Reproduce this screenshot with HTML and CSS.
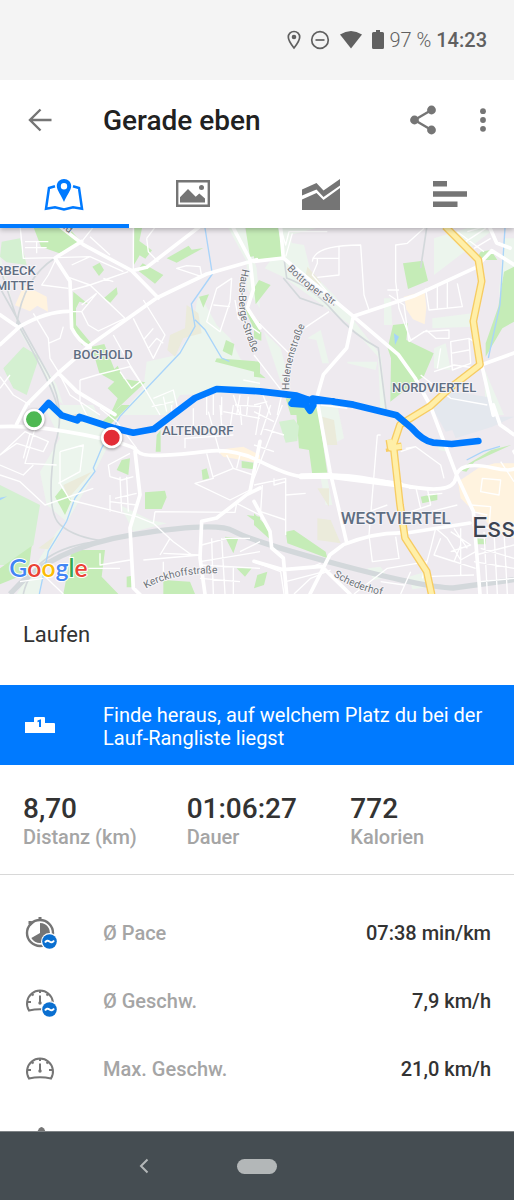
FILE: index.html
```html
<!DOCTYPE html>
<html lang="de">
<head>
    <meta charset="UTF-8">
    <meta name="viewport" content="width=device-width, initial-scale=1">
    <title>Gerade eben</title>
    <link rel="stylesheet" href="styles.css">
</head>
<body>
    <div class="status">
        <svg width="14" height="20" viewBox="0 0 14 20"><path d="M7 1.5C3.7 1.5 1.3 4 1.3 7.1 1.3 11 7 18 7 18s5.700-7 5.700-10.900C12.700 4 10.300 1.500 7 1.500z" fill="none" stroke="#606060" stroke-width="1.700"/><circle cx="7" cy="7" r="2.300" fill="#606060"/></svg>
        <svg width="20" height="20" viewBox="0 0 20 20" fill="none" stroke="#606060" stroke-width="1.700"><circle cx="10" cy="10" r="8.300"/><path d="M5.500 10h9"/></svg>
        <svg width="24" height="20" viewBox="0 0 24 20"><path d="M1 4.500Q12-2.500 23 4.500L12 18.500z" fill="#606060"/></svg>
        <svg width="12" height="20" viewBox="0 0 12 20"><path d="M4 0h4v2h2.500q1.500 0 1.500 1.500v14q0 1.500-1.500 1.500h-9Q0 19 0 17.500v-14Q0 2 1.500 2H4z" fill="#606060"/></svg>
        <span class="battery">97 %</span>
        <time class="clock">14:23</time>
    </div>

    <header class="app-bar">
        <button class="icon-btn" type="button" aria-label="Zurück">
            <svg width="24" height="24" viewBox="0 0 24 24" fill="none" stroke="#757575" stroke-width="2.400"><path d="M23.500 12H2.500M12.500 1.500 2 12l10.500 10.500"/></svg>
        </button>
        <h1 class="title">Gerade eben</h1>
        <button class="icon-btn share" type="button" aria-label="Teilen">
            <svg width="28" height="30" viewBox="0 0 28 30" fill="#757575"><path d="M22.500 5 5.500 15l17 10" fill="none" stroke="#757575" stroke-width="2.400"/><circle cx="22.500" cy="5" r="4.400"/><circle cx="5.500" cy="15" r="4.400"/><circle cx="22.500" cy="25" r="4.400"/></svg>
        </button>
        <button class="icon-btn" type="button" aria-label="Mehr">
            <svg width="6" height="24" viewBox="0 0 6 24" fill="#757575"><circle cx="3" cy="3.200" r="2.900"/><circle cx="3" cy="12" r="2.900"/><circle cx="3" cy="20.800" r="2.900"/></svg>
        </button>
    </header>

    <nav class="tabs">
        <button class="tab active" type="button" aria-label="Karte">
            <svg width="40" height="34" viewBox="0 0 40 34"><path d="M11 9.200 5 11 2 31.800l9-1.500 9 2.200 9-2.200 9 1.500L35 11l-6-1.800" fill="none" stroke="#007aff" stroke-width="2.500"/><path fill="#007aff" fill-rule="evenodd" d="M20 2c-4 0-7.200 3-7.200 7 0 4.500 4.700 9.500 7.200 16 2.500-6.500 7.200-11.500 7.200-16 0-4-3.200-7-7.200-7zm0 4a3.200 3.200 0 1 1 0 6.400A3.200 3.200 0 0 1 20 6z"/></svg>
        </button>
        <button class="tab" type="button" aria-label="Fotos">
            <svg width="34" height="28" viewBox="0 0 34 28"><path d="M1.200 1.200h31.600v24.600H1.200z" fill="none" stroke="#757575" stroke-width="2.400"/><path d="M4 22.500v-5.200l8-8.300 7.700 7.700 3.600-3.100 5.700 5v3.900z" fill="#757575"/><circle cx="25.500" cy="7.500" r="2.500" fill="#757575"/></svg>
        </button>
        <button class="tab" type="button" aria-label="Diagramm">
            <svg width="40" height="34" viewBox="0 0 40 34" fill="#757575"><path d="M1 12.500 15.500 6l7 7.500L39 2v6.500L22.500 20l-7-7.500L1 18.500z"/><path d="M1 22.500 15.500 16l7 7L39 11v22H1z"/></svg>
        </button>
        <button class="tab" type="button" aria-label="Werte">
            <svg width="36" height="28" viewBox="0 0 36 28" fill="#757575"><path d="M1 1h14v5.500H1zM1 11.200h34v5.600H1zM1 21.500h24.500V27H1z"/></svg>
        </button>
    </nav>

    <main class="content">
        <!-- Route map, drawn in four tiles -->
        <svg class="map" viewBox="0 0 1542 1098" role="img" aria-label="Laufstrecke">
            <defs>
                <path id="haus" d="M727 122Q705 225 731 300T772 410"/>
                <path id="helenen" d="M868 486Q864 400 926 268"/>
                <path id="bottroper" d="M860 123Q925 192 1024 246"/>
                <path id="kerck" d="M438 1082Q520 1032 670 1036"/>
                <path id="scheder" d="M1000 1043Q1075 1096 1200 1110"/>
                <path id="feld" d="M168 -17 250 52"/>
            </defs>

            <!-- parks, fields, buildings -->
            <g transform="translate(0 -9)">
                <path class="mist" d="M590 230 580 310 530 390 440 410 430 490 360 570 500 570 540 510 780 500V450L720 400 690 340 650 300 600 210zM0 90 60 320 180 530 230 570H200L170 480 50 290 20 190 0 120zM680 0h50l40 130 10 120-40-60V110z"/>
                <path class="mint" d="M5 50 60 40 80 120 20 112 0 95zM10 430 70 365 118 395 80 510 40 490z"/>
                <path class="park" d="M98 0h100l45 50-65 35-55-20zM403 0h25l-10 48 38 28-20 25-17-10-17 28zM500 100l66-38 9 12 35-5-80 44zM277 125l22-12 13 22-15 18zM428 115 490 150 465 176 412 135zM220 200l45 38-27-8-10 20 0 50 48 58-30 3-30-55zM350 187l3 20-22 26-20-13zM275 365l38-8 30 75 10-10 18 40 65 10-105 98H330l23-50-30-30 20-20-45-25zM597 215l30-7-17 40zM650 400l130 10v35l-135-35zM678 345l25 12-7 35-28-14zM725 230l35 80 20 20V290l-15 5zM735 0h45v90l-30 6z"/>
                <path class="sand" d="M560 240 595 265 605 325 550 340 525 395 502 375 510 330 555 310z"/>
                <path class="peach" d="M72 180l68 35 4 45-32-18-22 17-45-18z"/>
            </g>
            <g transform="translate(762 -9)">
                <path class="mist" d="M60 0h160L110 30l10 70-60-20zM150 60l20 80 70 70 140 180 20 180H380l-8-175-90-100-195-140-55-25 60-80zM540 40l130-40 40 20-170 130zM535 280l120-15v40l-120 5zM735 200l15 50 30-110V40h-30zM30 320l50 50 30 120-30-20zM390 220l20 0 5 80-25 0zM160 340l40-25 25 100-20 0-18-70zM280 410l90 0-5 25-85-20zM540 370l35-15 15 80-50-5zM690 430l60 140h-55z"/>
                <path class="park" d="M0 0h70l20 95L0 105zM0 190l15-25 35 15-45 58zM0 310l22 12v25L0 340zM447 115l60-8 15 60-60 25zM417 300l45-5-5 50 82 40-30 70-30 20-70 55 2-130-10-30zM680 80l30-5 20 30-65 0zM750 140l30-15v165l-35 20-50 85 0-40 38-110zM0 430l35 30-35-5zM95 520l65 0-15 50H110z"/>
                <path class="peach" d="M450 215l62-17 5 50-5 50-35-15-20-30z"/>
                <path class="sand" d="M160 125l40 45-5 20-40-40z"/>
                <path class="water-fill" d="M420 325l15 10-12 25z"/>
            </g>
            <g transform="translate(0 531)">
                <path class="mist" d="M130 0h150l50 110-55 110-135 240-20 107H50L170 380 200 350 140 300 120 200 180 100zM180 110l80 0-10 90-70 10z"/>
                <path class="mist" d="M360 300l40 80 100-25-50-10z"/>
                <path class="mint" d="M0 240l120 60-20 120-70 60H0z"/>
                <path class="park" d="M365 0h25l-70 70-20-15zM470 90l12-15v65h-15zM365 165l25-5-5 50-35-15zM165 275l20-25 30 35-20 45zM435 262l60-5 5 20-15 35-50 0zM605 195l15-5 8 30-20 5zM725 168l35 5 0 20-35-5zM215 435l100 0-10 80 50 52H190zM0 490l95-67-10 80-85 35zM380 515l15-3v35h-15zM490 525l80 5 15 37h-95zM675 395l40 5-15 45zM710 490l45 0-20 25zM740 330l40 5v25z"/>
                <path class="sand" d="M190 240l85-40-70 80zM115 430l50-37-20 40z"/>
                <path class="peach" d="M650 135l80-10 50 25v25l-110-20z"/>
                <path class="water-fill" d="M0 278l22-4-22 12z"/>
            </g>
            <g transform="translate(762 531)">
                <path class="mist" d="M190 0h60l20 100-40 20zM200 220l15 80 20 0-15-80zM465 515l50-15 10 45-50 8zM340 490l40-5 20 30-40 10zM550 120l25 5 5 15-25-5z"/>
                <path class="park" d="M125 0h65l30 205-45 5-10-75-30-5zM500 275l50-10v20l-45 10zM612 195l100-60 60-15-110 50-25 30zM95 380l25-5 95 65 5 20-120-45zM0 325l50 50 0 30-50-45zM10 510l30-10-10 40-30 10zM665 400l30 3v15l-30 0z"/>
                <path class="mint" d="M75 50l45-7 15 20-5 45-35 5z"/>
                <path class="sand" d="M205 35l35 10 10 75-30 0zM190 250l35 0 0 55zM190 340l40 5 30 70-70-10z"/>
                <path class="peach" d="M612 230l60-40 50-15 58 0v225l-60-20-30-40-50-40-20-20z"/>
                <path class="lake" d="M530 0 570-45l125 20h15l20 60 50 0-65 30-110 35-10-25-20 5z"/>
            </g>

            <!-- rail and rivers -->
            <g class="rail">
                <path d="M0 180Q90 340 145 440T165 650Q135 850 180 890T320 940M0 120 60 300Q160 480 170 530T230 560M50 290Q70 150 165 90M70 1098Q100 960 300 940M840 0 860 150Q940 180 1000 250T1135 360L1160 560M850 150 900 210 970 235M1280 0 1262 120"/>
                <path class="wide" d="M30 1098Q150 960 400 920T700 909 1010 1008 1360 1080L1542 1055"/>
            </g>
            <g class="river">
                <path d="M615 0 637 138 574 228 585 295 540 375 360 565 305 660 280 720 285 730 225 810 200 880 145 970 118 1098M585 275 615 305 665 390 688 400M1515 0 1500 230 1465 390M1400 696 1450 670 1500 655"/>
            </g>

            <!-- small streets -->
            <g class="street" transform="translate(0 -9)">
                <path d="M60 0 70 100 170 98M75 50h70M75 68h65M110 50v35M170 98 145 150 125 180 205 190M170 98 270 95 370 140M270 95 215 120M200 155 270 180 385 140M215 195 270 180 375 280M245 240 290 205M215 260 245 260 265 300 295 318 375 280M245 260 290 205M310 160 340 170M400 0V135M440 40 445 80 475 110M440 40 470 0M530 130 605 155 600 125 560 122zM270 35 330 90M285 0 245 50M400 280 460 400 495 330 430 225M430 345 460 310M445 370 470 340 490 355M340 330 390 420 440 500 480 570M240 465 290 450 390 425 420 470 395 490 360 440M240 465V530L260 570M100 265 145 340 150 400 175 440 210 510 300 570M145 355 180 340 190 305M0 455 40 510 90 540M620 290 650 190 695 160 690 230 660 320zM640 240 690 245M0 490 30 450M460 520 520 495 535 560M455 545 520 530M490 515 500 560M620 510V570M640 510V570M665 515V570M700 510 720 570M720 510 710 570M745 515 740 570M705 540 780 545M705 225 715 280 780 325M730 465 780 475"/>
            </g>
            <g class="street" transform="translate(762 -9)">
                <path d="M80 10 95 60 105 20 220 20M95 95 115 25M175 110Q180 60 320 60L330 210 345 255M175 100h80M255 65v85l-65 7M190 100v15l-15 35 70 80M425 170V60L460 55 510 10M425 170l10 80 35 95 50-30M400 195h35M405 210l45 30 15 110M465 350l45-30 75-5V340l-40 0-25-22M515 190l10 65 100-10-15-70M550 180V250M580 170V250M610 20l80 60M640 20 690 5M635 50l60-40M660 70l50-30M590 350l55-10 5 75-55 20zM590 385l55-10M645 340 660 350M540 440l60-20 70 10M560 370l-10 60M0 390 85 500M0 280 120 400M225 260 150 310 110 370 85 500 70 570M0 540 40 530M25 505 50 570M200 540 280 550M500 450 590 520 700 540"/>
            </g>
            <g class="street" transform="translate(0 531)">
                <path d="M0 150 50 115 130 140 145 110 75 80zM105 70 75 175 170 180M90 85 70 160M0 210 60 230 135 300 280 250M0 180 70 210 100 180M180 140 250 120 240 200 175 235M180 140V235L210 285 410 335M390 145 325 180 330 215 365 225 400 215M360 215 365 320M380 215 385 320M345 280 410 265M330 290 410 300M330 270V320M410 335 460 355 520 410 575 450M465 320 460 355M465 320 705 322 710 295 780 330M300 445V480L390 465M265 490 360 490M490 445 600 450M490 470V500M510 400 480 450M430 465 600 450M300 10 350 50 410 130M515 0V40M580 10V65M625 20 660 145M555 130V100L700 90M660 0 665 60 700 70M700 0 690 70M720 0 725 60M670 20 780 40M620 145 640 220 585 235 690 285 750 255M640 215 700 190 760 210M680 150 700 190M720 150 710 190M605 420 680 400 750 400M600 470 780 440M635 400 640 567M665 400 675 567M600 480 780 490M600 520 720 530M700 485V567M720 440 780 410M120 500 190 567M60 530 130 520"/>
            </g>
            <g class="street" transform="translate(762 531)">
                <path d="M85 0 0 220M0 20 60 50M20 0 5 90M50 0 20 90M0 120 60 140M25 70 90 90M0 240 95 220V390M25 240 20 320 95 345M60 220 60 240 95 230M95 270 155 265M370 90 345 390 355 470 435 460 425 395M370 90h10M345 320 400 300M455 130 485 125 560 180 570 220M485 125 440 140M465 250 520 250 530 300 470 320M485 245 500 310M520 270 565 265M430 325 530 320 610 300M545 370 530 430 505 520M545 370 580 400 620 465 665 440M560 400 540 450 600 470 620 420M540 450 665 490M620 370V510M590 380 650 420 590 440M600 370 640 430M510 515 660 510M680 430 780 460M690 380 700 567M720 380 730 567M750 380 760 567M660 470 780 490M665 450 780 420M680 530 780 520M650 300 710 305 705 370 655 360M655 320 700 330M680 260 685 220 740 225 735 270zM740 170 780 230M0 470 80 500 90 567M80 495 160 490 200 475M120 567 170 520 230 495M95 530 210 500M300 567 400 490 520 470M380 530 450 540M440 567 470 500"/>
            </g>

            <!-- main roads -->
            <g class="road">
                <path d="M180 -5 250 50 395 128 475 210M770 95 620 138 470 210 270 352 175 435 80 530 50 588M395 128 440 118 600 -5M245 40 165 90 210 160 215 300Q235 340 270 358M205 250Q140 250 60 295L0 350M0 260 50 295M700 0 750 95 760 185 742 240 780 300M175 435 230 490 345 560M842 0 850 90 1060 265 1195 380 1245 450 1290 531 1370 742 1420 850 1440 1098M762 100 850 90M1060 265 1240 205 1428 118 1475 68 1542 110M1060 265 1040 360 970 440 950 510 990 730 1040 944M1445 410 1542 375M1445 410 1480 562M0 596Q100 590 250 620T410 667 480 682 620 670 780 700 900 745 990 743 1200 770 1367 750 1480 720 1542 670M405 670 420 800 390 900 400 1080 420 1100M780 780 740 800 650 870 605 880 600 990 615 1098M750 790 780 640M762 820 810 910 815 960 850 990 860 1098M762 1000 850 1025 965 1015 1050 1098M930 1098 990 980 1030 950Q1130 910 1220 915L1410 885M1470 0 1490 45 1530 60M1480 531 1500 590 1542 620"/>
                <path class="big" d="M905 745 980 743 1010 746 1200 770"/>
            </g>
            <g class="highway">
                <path class="case" d="M1335 -5 1435 95 1445 160 1420 280 1440 410 1350 480 1290 535 1200 590 1180 650 1200 830 1215 930 1280 1030 1295 1100M1168 635 1172 660 1205 655M1168 660 1170 670"/>
                <path class="core" d="M1335 -5 1435 95 1445 160 1420 280 1440 410 1350 480 1290 535 1200 590 1180 650 1200 830 1215 930 1280 1030 1295 1100M1168 635 1172 660 1205 655"/>
            </g>

            <!-- place names -->
            <g class="place">
                <text x="-14" y="142">RBECK</text>
                <text x="-13" y="187">MITTE</text>
                <text x="220" y="393">BOCHOLD</text>
                <text x="486" y="621">ALTENDORF</text>
                <text x="1176" y="492">NORDVIERTEL</text>
                <text class="larger" x="1022" y="887">WESTVIERTEL</text>
                <text class="city" x="1416" y="928">Essen</text>
            </g>
            <g class="street-name">
                <text><textPath href="#haus">Haus-Berge-Straße</textPath></text>
                <text><textPath href="#helenen">Helenenstraße</textPath></text>
                <text><textPath href="#bottroper">Bottroper Str.</textPath></text>
                <text><textPath href="#kerck">Kerckhoffstraße</textPath></text>
                <text><textPath href="#scheder">Schederhof</textPath></text>
                <text><textPath href="#feld">feld</textPath></text>
            </g>

            <!-- track with start and finish -->
            <path class="track" d="M102 574 146 525 185 562 232 577 238 567 340 600 400 614 462 603 585 510 650 483 780 490 890 503 930 517 1000 520M900 511 875 527 918 530 930 548 940 532 938 515 880 520M938 512 1060 530 1190 562 1235 600Q1270 640 1300 644L1355 648 1435 639"/>
            <g class="pin">
                <circle cx="102" cy="574" r="28" fill="#4eb852"/>
                <circle cx="335" cy="629" r="28" fill="#e22c36"/>
            </g>
            <text class="logo" x="28" y="1048"><tspan fill="#4285f4">G</tspan><tspan fill="#ea4335">o</tspan><tspan fill="#fbbc05">o</tspan><tspan fill="#4285f4">g</tspan><tspan fill="#34a853">l</tspan><tspan fill="#ea4335">e</tspan></text>
        </svg>

        <h2 class="sport">Laufen</h2>

        <a class="banner" href="#rangliste">
            <svg width="34" height="20" viewBox="0 0 34 20"><path d="M2 7h9V3q0-1 1-1h9q1 0 1 1v5h9q1 0 1 1v9H2z" fill="#fff"/><path d="M14.500 5.500 18 4.200V12h-2V6.700l-1.500.500z" fill="#007aff"/></svg>
            <span>Finde heraus, auf welchem Platz du bei der Lauf-Rangliste liegst</span>
        </a>

        <dl class="stats">
            <div class="stat"><dt>Distanz (km)</dt><dd>8,70</dd></div>
            <div class="stat"><dt>Dauer</dt><dd>01:06:27</dd></div>
            <div class="stat"><dt>Kalorien</dt><dd>772</dd></div>
        </dl>

        <dl class="details">
            <div class="row">
                <svg width="34" height="34" viewBox="0 0 34 34"><circle cx="16" cy="17" r="13" fill="none" stroke="#757575" stroke-width="2.400"/><path d="M14.500 1h3v3h-3zM4.500 5h3l2 2-3 3-2-2z" fill="#757575"/><path d="M16 7a10 10 0 1 1-8.700 15L16 17z" fill="#757575"/><circle cx="25.500" cy="25.500" r="8.500" fill="#fff"/><circle cx="25.500" cy="25.500" r="7.300" fill="#0a6fd0"/><path d="M21 26.500q2-3 4.500-1t4.500-1" fill="none" stroke="#fff" stroke-width="2"/></svg>
                <dt>Ø Pace</dt><dd>07:38 min/km</dd>
            </div>
            <div class="row">
                <svg width="34" height="34" viewBox="0 0 34 34"><path id="gauge" d="M5 26.500a13 13 0 1 1 22 0Q16 24 5 26.500zM16 6v3M7 9l2.500 2.500M25 9l-2.500 2.500M3.500 18H7M25 18h3.500M16 11.500V18" fill="none" stroke="#757575" stroke-width="2"/><circle cx="16" cy="19" r="1.700" fill="#757575"/><circle cx="25.500" cy="25.500" r="8.500" fill="#fff"/><circle cx="25.500" cy="25.500" r="7.300" fill="#0a6fd0"/><path d="M21 26.500q2-3 4.500-1t4.500-1" fill="none" stroke="#fff" stroke-width="2"/></svg>
                <dt>Ø Geschw.</dt><dd>7,9 km/h</dd>
            </div>
            <div class="row">
                <svg width="34" height="34" viewBox="0 0 34 34"><use href="#gauge"/><circle cx="16" cy="19" r="1.700" fill="#757575"/></svg>
                <dt>Max. Geschw.</dt><dd>21,0 km/h</dd>
            </div>
            <div class="row">
                <svg width="34" height="34" viewBox="0 0 34 34"><path d="M3 31 15 8.500q2.500-3 5 0L31 31z" fill="#757575"/></svg>
            </div>
        </dl>
    </main>

    <footer class="system-nav">
        <button class="back" type="button" aria-label="Zurück">
            <svg width="10" height="16" viewBox="0 0 10 16"><path d="M8.500 1.500 2 8l6.500 6.500" fill="none" stroke="#b3b7b8" stroke-width="2"/></svg>
        </button>
        <button class="home" type="button" aria-label="Startbildschirm"></button>
    </footer>
</body>
</html>
```
FILE: styles.css
```css
* {
    box-sizing: border-box;
}
body {
    margin: 0;
    height: 100vh;
    display: flex;
    flex-direction: column;
    background: #fff;
    color: #333;
    font-family: Roboto, sans-serif;
    overflow: hidden;
}
button {
    margin: 0;
    padding: 0;
    border: 0;
    background: none;
    font: inherit;
    cursor: pointer;
}
svg {
    display: block;
    flex: none;
}
dl, dd, h1, h2 {
    margin: 0;
}
.status {
    flex: none;
    height: 80px;
    display: flex;
    align-items: center;
    justify-content: flex-end;
    padding-right: 27px;
    background: #f4f4f4;
    color: #606060;
    font-size: 20px;
}
.status svg {
    margin-right: 9px;
}
.status .battery {
    margin-left: -4px;
    margin-right: 5px;
    font-weight: 300;
}
.status .clock {
    font-weight: 500;
}
.app-bar {
    flex: none;
    height: 80px;
    display: flex;
    align-items: center;
    position: relative;
    z-index: 2;
    padding: 0 28px;
    background: #fff;
}
.title {
    flex: 1;
    padding-left: 51px;
    font-size: 28px;
    font-weight: 500;
    color: #212121;
}
.share {
    margin-right: 43px;
}
/* Tabs */
.tabs {
    flex: none;
    height: 68px;
    display: flex;
    position: relative;
    z-index: 1;
    background: #fff;
    box-shadow: 0 2px 5px rgba(0, 0, 0, 0.25);
}
.tab {
    flex: 1;
    display: flex;
    align-items: center;
    justify-content: center;
    border-bottom: 4px solid transparent;
    padding-top: 4px;
}
.tab.active {
    border-bottom-color: #007aff;
}
.content {
    flex: 1;
    min-height: 0;
    overflow: hidden;
}
/* Map */
.map {
    width: 100%;
    height: auto;
    background: #eeeaef;
}
.mist { fill: #ecf5ed; }
.mint { fill: #d4f0d1; }
.park { fill: #c5ecb7; }
.sand { fill: #ebebdb; }
.peach { fill: #fff3df; }
.lake { fill: #e4e8ee; }
.water-fill { fill: #a5d4fb; }
.rail path {
    fill: none;
    stroke: #d3d8db;
    stroke-width: 5;
}
.rail .wide {
    stroke-width: 16;
}
.river path {
    fill: none;
    stroke: #a9d4fa;
    stroke-width: 4;
}
.street path, .road path {
    fill: none;
    stroke: #fff;
    stroke-width: 4;
    stroke-linejoin: round;
}
.road path {
    stroke-width: 11;
    stroke-linecap: round;
}
.road .big {
    stroke-width: 18;
}
.highway path {
    fill: none;
    stroke-linejoin: round;
}
.highway .case {
    stroke: #f7cc62;
    stroke-width: 23;
}
.highway .core {
    stroke: #ffefa8;
    stroke-width: 15;
}
.place text, .street-name text {
    paint-order: stroke;
    stroke: #f6f4f7;
    stroke-width: 6;
    stroke-linejoin: round;
}
.place text {
    fill: #5f6e82;
    font-size: 39px;
    font-weight: 500;
}
.place .larger {
    font-size: 51px;
}
.place .city {
    fill: #3c4350;
    font-size: 81px;
    font-weight: 400;
}
.street-name text {
    fill: #6c7278;
    font-size: 31px;
}
.track {
    fill: none;
    stroke: #007aff;
    stroke-width: 20;
    stroke-linecap: round;
    stroke-linejoin: round;
}
.pin circle {
    stroke: #fff;
    stroke-width: 8;
    filter: drop-shadow(0 3px 4px rgba(0, 0, 0, 0.4));
}
.logo {
    font-family: Lato, sans-serif;
    font-size: 74px;
    font-weight: 600;
    paint-order: stroke;
    stroke: #fff;
    stroke-width: 6;
}
/* Activity */
.sport {
    padding: 27px 23px;
    font-size: 22px;
    font-weight: 400;
    line-height: 28px;
    height: 91px;
}
.banner {
    display: flex;
    align-items: center;
    min-height: 80px;
    padding: 0 23px;
    background: #007aff;
    color: #fff;
    font-size: 20px;
    line-height: 23px;
    text-decoration: none;
}
.banner span {
    padding: 3px 0 0 46px;
}
.stats {
    display: grid;
    grid-template-columns: repeat(3, 1fr);
    padding: 28px 0 25px 23px;
    border-bottom: 1px solid #d8d8d8;
}
.stat {
    display: flex;
    flex-direction: column-reverse;
    justify-content: flex-end;
}
.stat dd {
    font-size: 28px;
    font-weight: 500;
    line-height: 32px;
}
.stat dt {
    color: #a5a5a5;
    font-size: 20px;
    font-weight: 500;
    line-height: 24px;
}
.details {
    padding-top: 24px;
}
.row {
    display: flex;
    align-items: center;
    height: 68px;
    padding: 0 23px 0 24px;
    font-size: 20px;
    font-weight: 500;
}
.row dt {
    flex: 1;
    padding-left: 45px;
    color: #a5a5a5;
}
/* System navigation */
.system-nav {
    flex: none;
    height: 69px;
    display: grid;
    grid-template-columns: 1fr 40px 1fr;
    align-items: center;
    border-top: 1px solid #7e8386;
    background: #454d52;
}
.back {
    justify-self: end;
    padding-right: 88px;
}
.home {
    height: 15px;
    border-radius: 8px;
    background: #b3b7b8;
}
```
